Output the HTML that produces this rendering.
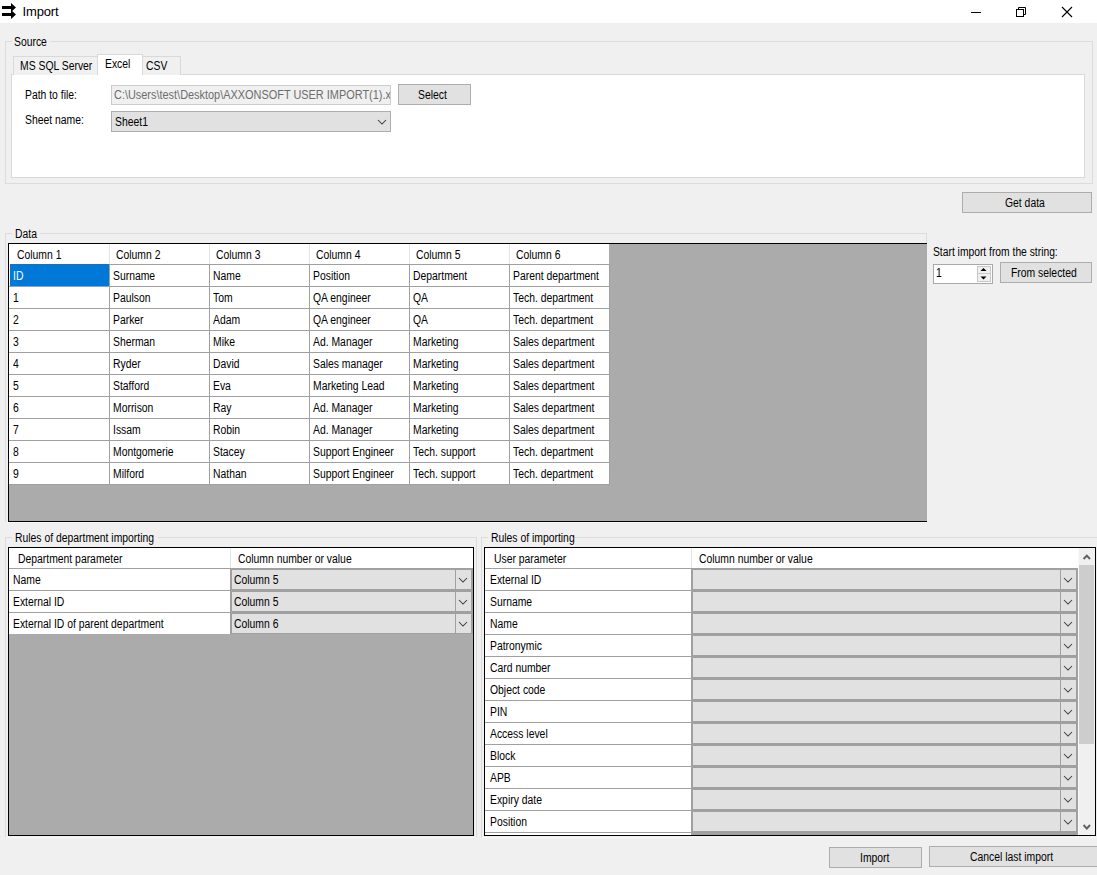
<!DOCTYPE html>
<html><head><meta charset="utf-8"><title>Import</title>
<style>
html,body{margin:0;padding:0}
body{width:1097px;height:875px;position:relative;overflow:hidden;background:#f0f0f0;font-family:"Liberation Sans",sans-serif;font-size:12px;line-height:13px;color:#000;letter-spacing:0px}
.a{position:absolute}
.t{position:absolute;white-space:nowrap;transform-origin:0 0;transform:scaleX(0.865)}
svg.a{display:block;overflow:visible}
</style></head><body>
<div class="a" style="left:0px;top:0px;width:1097px;height:23px;background:#fff;"></div>
<svg class="a" style="left:0;top:0" width="20" height="22"><rect x="2" y="6" width="10" height="3" fill="#000"/><rect x="2" y="13" width="10" height="3" fill="#000"/><polygon points="11,3 16,7.5 11,12" fill="#000"/><polygon points="11,10 16,14.5 11,19" fill="#000"/></svg>
<div class="t" style="left:22.5px;top:5px;font-size:13px;transform:scaleX(1);letter-spacing:-0.15px;">Import</div>
<div class="a" style="left:971px;top:12px;width:10px;height:1px;background:#000;"></div>
<svg class="a" style="left:1015px;top:6px" width="13" height="12"><rect x="1.5" y="3.5" width="7" height="7" fill="none" stroke="#000"/><path d="M3.5 3.5 V1.5 H10.5 V8.5 H8.5" fill="none" stroke="#000"/></svg>
<svg class="a" style="left:1061px;top:6px" width="12" height="12"><path d="M1 1 L11 11 M11 1 L1 11" stroke="#000" stroke-width="1.1"/></svg>
<div class="a" style="left:5px;top:41px;width:1088px;height:143px;border:1px solid #dcdcdc;box-sizing:border-box;"></div>
<div class="a" style="left:12px;top:36px;width:38px;height:12px;background:#f0f0f0;"></div>
<div class="t" style="left:14px;top:36px;">Source</div>
<div class="a" style="left:11px;top:74px;width:1074px;height:104px;background:#fff;border:1px solid #d9d9d9;box-sizing:border-box;"></div>
<div class="a" style="left:13px;top:56px;width:85px;height:19px;background:#f0f0f0;border:1px solid #d9d9d9;box-sizing:border-box;border-bottom:none;"></div>
<div class="a" style="left:142px;top:56px;width:39px;height:19px;background:#f0f0f0;border:1px solid #d9d9d9;box-sizing:border-box;border-bottom:none;"></div>
<div class="a" style="left:97px;top:54px;width:46px;height:21px;background:#fff;border:1px solid #d9d9d9;box-sizing:border-box;border-bottom:none;"></div>
<div class="t" style="left:19.5px;top:60px;">MS SQL Server</div>
<div class="t" style="left:105px;top:58px;">Excel</div>
<div class="t" style="left:146px;top:60px;">CSV</div>
<div class="t" style="left:24.5px;top:89px;">Path to file:</div>
<div class="a" style="left:111px;top:85px;width:280px;height:20px;background:#f0f0f0;border:1px solid #cccccc;box-sizing:border-box;"></div>
<div class="a" style="left:112px;top:86px;width:278px;height:18px;overflow:hidden">
<div class="t" style="left:1.9px;top:3px;transform:scaleX(0.91);color:#6d6d6d;">C:\Users\test\Desktop\AXXONSOFT USER IMPORT(1).xlsx</div>
</div>
<div class="a" style="left:398px;top:84px;width:73px;height:21px;background:#e1e1e1;border:1px solid #adadad;box-sizing:border-box;"></div>
<div class="t" style="left:418px;top:89px;">Select</div>
<div class="t" style="left:24.5px;top:114px;">Sheet name:</div>
<div class="a" style="left:111px;top:111px;width:280px;height:21px;background:#e1e1e1;border:1px solid #adadad;box-sizing:border-box;"></div>
<div class="t" style="left:115px;top:116px;">Sheet1</div>
<svg class="a" style="left:377.0px;top:119.0px" width="10" height="6"><polyline points="1,1 5.0,5 9,1" fill="none" stroke="#3a3a3a" stroke-width="1.05"/></svg>
<div class="a" style="left:962px;top:192px;width:130px;height:21px;background:#e1e1e1;border:1px solid #adadad;box-sizing:border-box;"></div>
<div class="t" style="left:1004.8px;top:197px;">Get data</div>
<div class="a" style="left:5px;top:233px;width:922px;height:290px;border:1px solid #dcdcdc;box-sizing:border-box;border-bottom-color:#f7f7f7;"></div>
<div class="a" style="left:12px;top:228px;width:28px;height:12px;background:#f0f0f0;"></div>
<div class="t" style="left:14.5px;top:228px;">Data</div>
<div class="a" style="left:8px;top:243px;width:919px;height:279px;background:#ababab;border-top:1px solid #000;border-left:1px solid #000;border-bottom:1px solid #000;box-sizing:border-box;"></div>
<div class="a" style="left:9px;top:244px;width:600px;height:20px;background:#fff;"></div>
<div class="t" style="left:17px;top:249px;">Column 1</div>
<div class="a" style="left:109px;top:244px;width:1px;height:20px;background:#e5e5e5;"></div>
<div class="t" style="left:116.2px;top:249px;">Column 2</div>
<div class="a" style="left:209px;top:244px;width:1px;height:20px;background:#e5e5e5;"></div>
<div class="t" style="left:216.2px;top:249px;">Column 3</div>
<div class="a" style="left:309px;top:244px;width:1px;height:20px;background:#e5e5e5;"></div>
<div class="t" style="left:316.2px;top:249px;">Column 4</div>
<div class="a" style="left:409px;top:244px;width:1px;height:20px;background:#e5e5e5;"></div>
<div class="t" style="left:416.2px;top:249px;">Column 5</div>
<div class="a" style="left:509px;top:244px;width:1px;height:20px;background:#e5e5e5;"></div>
<div class="t" style="left:516.2px;top:249px;">Column 6</div>
<div class="a" style="left:9px;top:264px;width:601px;height:221px;background:#a0a0a0;"></div>
<div class="a" style="left:9px;top:264px;width:1px;height:22px;background:#fff;"></div>
<div class="a" style="left:10px;top:264px;width:99px;height:22px;background:#0078d7;"></div>
<div class="t" style="left:13.2px;top:270px;color:#fff;">ID</div>
<div class="a" style="left:110px;top:265px;width:99px;height:21px;background:#fff;"></div>
<div class="t" style="left:113.2px;top:270px;">Surname</div>
<div class="a" style="left:210px;top:265px;width:99px;height:21px;background:#fff;"></div>
<div class="t" style="left:213.2px;top:270px;">Name</div>
<div class="a" style="left:310px;top:265px;width:99px;height:21px;background:#fff;"></div>
<div class="t" style="left:313.2px;top:270px;">Position</div>
<div class="a" style="left:410px;top:265px;width:99px;height:21px;background:#fff;"></div>
<div class="t" style="left:413.2px;top:270px;">Department</div>
<div class="a" style="left:510px;top:265px;width:99px;height:21px;background:#fff;"></div>
<div class="t" style="left:513.2px;top:270px;">Parent department</div>
<div class="a" style="left:9px;top:287px;width:100px;height:21px;background:#fff;"></div>
<div class="t" style="left:13.2px;top:292px;">1</div>
<div class="a" style="left:110px;top:287px;width:99px;height:21px;background:#fff;"></div>
<div class="t" style="left:113.2px;top:292px;">Paulson</div>
<div class="a" style="left:210px;top:287px;width:99px;height:21px;background:#fff;"></div>
<div class="t" style="left:213.2px;top:292px;">Tom</div>
<div class="a" style="left:310px;top:287px;width:99px;height:21px;background:#fff;"></div>
<div class="t" style="left:313.2px;top:292px;">QA engineer</div>
<div class="a" style="left:410px;top:287px;width:99px;height:21px;background:#fff;"></div>
<div class="t" style="left:413.2px;top:292px;">QA</div>
<div class="a" style="left:510px;top:287px;width:99px;height:21px;background:#fff;"></div>
<div class="t" style="left:513.2px;top:292px;">Tech. department</div>
<div class="a" style="left:9px;top:309px;width:100px;height:21px;background:#fff;"></div>
<div class="t" style="left:13.2px;top:314px;">2</div>
<div class="a" style="left:110px;top:309px;width:99px;height:21px;background:#fff;"></div>
<div class="t" style="left:113.2px;top:314px;">Parker</div>
<div class="a" style="left:210px;top:309px;width:99px;height:21px;background:#fff;"></div>
<div class="t" style="left:213.2px;top:314px;">Adam</div>
<div class="a" style="left:310px;top:309px;width:99px;height:21px;background:#fff;"></div>
<div class="t" style="left:313.2px;top:314px;">QA engineer</div>
<div class="a" style="left:410px;top:309px;width:99px;height:21px;background:#fff;"></div>
<div class="t" style="left:413.2px;top:314px;">QA</div>
<div class="a" style="left:510px;top:309px;width:99px;height:21px;background:#fff;"></div>
<div class="t" style="left:513.2px;top:314px;">Tech. department</div>
<div class="a" style="left:9px;top:331px;width:100px;height:21px;background:#fff;"></div>
<div class="t" style="left:13.2px;top:336px;">3</div>
<div class="a" style="left:110px;top:331px;width:99px;height:21px;background:#fff;"></div>
<div class="t" style="left:113.2px;top:336px;">Sherman</div>
<div class="a" style="left:210px;top:331px;width:99px;height:21px;background:#fff;"></div>
<div class="t" style="left:213.2px;top:336px;">Mike</div>
<div class="a" style="left:310px;top:331px;width:99px;height:21px;background:#fff;"></div>
<div class="t" style="left:313.2px;top:336px;">Ad. Manager</div>
<div class="a" style="left:410px;top:331px;width:99px;height:21px;background:#fff;"></div>
<div class="t" style="left:413.2px;top:336px;">Marketing</div>
<div class="a" style="left:510px;top:331px;width:99px;height:21px;background:#fff;"></div>
<div class="t" style="left:513.2px;top:336px;">Sales department</div>
<div class="a" style="left:9px;top:353px;width:100px;height:21px;background:#fff;"></div>
<div class="t" style="left:13.2px;top:358px;">4</div>
<div class="a" style="left:110px;top:353px;width:99px;height:21px;background:#fff;"></div>
<div class="t" style="left:113.2px;top:358px;">Ryder</div>
<div class="a" style="left:210px;top:353px;width:99px;height:21px;background:#fff;"></div>
<div class="t" style="left:213.2px;top:358px;">David</div>
<div class="a" style="left:310px;top:353px;width:99px;height:21px;background:#fff;"></div>
<div class="t" style="left:313.2px;top:358px;">Sales manager</div>
<div class="a" style="left:410px;top:353px;width:99px;height:21px;background:#fff;"></div>
<div class="t" style="left:413.2px;top:358px;">Marketing</div>
<div class="a" style="left:510px;top:353px;width:99px;height:21px;background:#fff;"></div>
<div class="t" style="left:513.2px;top:358px;">Sales department</div>
<div class="a" style="left:9px;top:375px;width:100px;height:21px;background:#fff;"></div>
<div class="t" style="left:13.2px;top:380px;">5</div>
<div class="a" style="left:110px;top:375px;width:99px;height:21px;background:#fff;"></div>
<div class="t" style="left:113.2px;top:380px;">Stafford</div>
<div class="a" style="left:210px;top:375px;width:99px;height:21px;background:#fff;"></div>
<div class="t" style="left:213.2px;top:380px;">Eva</div>
<div class="a" style="left:310px;top:375px;width:99px;height:21px;background:#fff;"></div>
<div class="t" style="left:313.2px;top:380px;">Marketing Lead</div>
<div class="a" style="left:410px;top:375px;width:99px;height:21px;background:#fff;"></div>
<div class="t" style="left:413.2px;top:380px;">Marketing</div>
<div class="a" style="left:510px;top:375px;width:99px;height:21px;background:#fff;"></div>
<div class="t" style="left:513.2px;top:380px;">Sales department</div>
<div class="a" style="left:9px;top:397px;width:100px;height:21px;background:#fff;"></div>
<div class="t" style="left:13.2px;top:402px;">6</div>
<div class="a" style="left:110px;top:397px;width:99px;height:21px;background:#fff;"></div>
<div class="t" style="left:113.2px;top:402px;">Morrison</div>
<div class="a" style="left:210px;top:397px;width:99px;height:21px;background:#fff;"></div>
<div class="t" style="left:213.2px;top:402px;">Ray</div>
<div class="a" style="left:310px;top:397px;width:99px;height:21px;background:#fff;"></div>
<div class="t" style="left:313.2px;top:402px;">Ad. Manager</div>
<div class="a" style="left:410px;top:397px;width:99px;height:21px;background:#fff;"></div>
<div class="t" style="left:413.2px;top:402px;">Marketing</div>
<div class="a" style="left:510px;top:397px;width:99px;height:21px;background:#fff;"></div>
<div class="t" style="left:513.2px;top:402px;">Sales department</div>
<div class="a" style="left:9px;top:419px;width:100px;height:21px;background:#fff;"></div>
<div class="t" style="left:13.2px;top:424px;">7</div>
<div class="a" style="left:110px;top:419px;width:99px;height:21px;background:#fff;"></div>
<div class="t" style="left:113.2px;top:424px;">Issam</div>
<div class="a" style="left:210px;top:419px;width:99px;height:21px;background:#fff;"></div>
<div class="t" style="left:213.2px;top:424px;">Robin</div>
<div class="a" style="left:310px;top:419px;width:99px;height:21px;background:#fff;"></div>
<div class="t" style="left:313.2px;top:424px;">Ad. Manager</div>
<div class="a" style="left:410px;top:419px;width:99px;height:21px;background:#fff;"></div>
<div class="t" style="left:413.2px;top:424px;">Marketing</div>
<div class="a" style="left:510px;top:419px;width:99px;height:21px;background:#fff;"></div>
<div class="t" style="left:513.2px;top:424px;">Sales department</div>
<div class="a" style="left:9px;top:441px;width:100px;height:21px;background:#fff;"></div>
<div class="t" style="left:13.2px;top:446px;">8</div>
<div class="a" style="left:110px;top:441px;width:99px;height:21px;background:#fff;"></div>
<div class="t" style="left:113.2px;top:446px;">Montgomerie</div>
<div class="a" style="left:210px;top:441px;width:99px;height:21px;background:#fff;"></div>
<div class="t" style="left:213.2px;top:446px;">Stacey</div>
<div class="a" style="left:310px;top:441px;width:99px;height:21px;background:#fff;"></div>
<div class="t" style="left:313.2px;top:446px;">Support Engineer</div>
<div class="a" style="left:410px;top:441px;width:99px;height:21px;background:#fff;"></div>
<div class="t" style="left:413.2px;top:446px;">Tech. support</div>
<div class="a" style="left:510px;top:441px;width:99px;height:21px;background:#fff;"></div>
<div class="t" style="left:513.2px;top:446px;">Tech. department</div>
<div class="a" style="left:9px;top:463px;width:100px;height:21px;background:#fff;"></div>
<div class="t" style="left:13.2px;top:468px;">9</div>
<div class="a" style="left:110px;top:463px;width:99px;height:21px;background:#fff;"></div>
<div class="t" style="left:113.2px;top:468px;">Milford</div>
<div class="a" style="left:210px;top:463px;width:99px;height:21px;background:#fff;"></div>
<div class="t" style="left:213.2px;top:468px;">Nathan</div>
<div class="a" style="left:310px;top:463px;width:99px;height:21px;background:#fff;"></div>
<div class="t" style="left:313.2px;top:468px;">Support Engineer</div>
<div class="a" style="left:410px;top:463px;width:99px;height:21px;background:#fff;"></div>
<div class="t" style="left:413.2px;top:468px;">Tech. support</div>
<div class="a" style="left:510px;top:463px;width:99px;height:21px;background:#fff;"></div>
<div class="t" style="left:513.2px;top:468px;">Tech. department</div>
<div class="t" style="left:932.8px;top:246px;transform:scaleX(0.858);">Start import from the string:</div>
<div class="a" style="left:933px;top:264px;width:60px;height:20px;background:#fff;border:1px solid #a9a9a9;box-sizing:border-box;"></div>
<div class="t" style="left:936px;top:267px;">1</div>
<div class="a" style="left:977px;top:266px;width:14px;height:16px;background:#f0f0f0;border:1px solid #c8c8c8;box-sizing:border-box;"></div>
<div class="a" style="left:978px;top:273px;width:12px;height:1px;background:#c8c8c8;"></div>
<svg class="a" style="left:980px;top:267px" width="8" height="14"><polygon points="0.5,4 3.5,1 6.5,4" fill="#000"/><polygon points="0.5,9.5 3.5,12.5 6.5,9.5" fill="#000"/></svg>
<div class="a" style="left:1000px;top:262px;width:92px;height:21px;background:#e1e1e1;border:1px solid #adadad;box-sizing:border-box;"></div>
<div class="t" style="left:1011.3px;top:267px;">From selected</div>
<div class="a" style="left:5px;top:537px;width:472px;height:301px;border:1px solid #dcdcdc;box-sizing:border-box;border-bottom-color:#f7f7f7;"></div>
<div class="a" style="left:12px;top:532px;width:146px;height:12px;background:#f0f0f0;"></div>
<div class="t" style="left:14.5px;top:532px;">Rules of department importing</div>
<div class="a" style="left:8px;top:547px;width:466px;height:289px;background:#ababab;border:1px solid #000;box-sizing:border-box;"></div>
<div class="a" style="left:9px;top:548px;width:464px;height:20px;background:#fff;"></div>
<div class="a" style="left:230px;top:548px;width:1px;height:20px;background:#e5e5e5;"></div>
<div class="t" style="left:18px;top:553px;">Department parameter</div>
<div class="t" style="left:237.5px;top:553px;">Column number or value</div>
<div class="a" style="left:9px;top:568px;width:464px;height:66px;background:#a0a0a0;"></div>
<div class="a" style="left:9px;top:569px;width:221px;height:21px;background:#fff;"></div>
<div class="t" style="left:13.4px;top:574px;">Name</div>
<div class="a" style="left:232px;top:570px;width:239px;height:19px;background:#e1e1e1;"></div>
<div class="a" style="left:455px;top:570px;width:1px;height:19px;background:#a0a0a0;"></div>
<div class="t" style="left:233.7px;top:574px;">Column 5</div>
<svg class="a" style="left:458.0px;top:577.0px" width="10" height="6"><polyline points="1,1 5.0,5 9,1" fill="none" stroke="#3a3a3a" stroke-width="1.05"/></svg>
<div class="a" style="left:9px;top:591px;width:221px;height:21px;background:#fff;"></div>
<div class="t" style="left:13.4px;top:596px;">External ID</div>
<div class="a" style="left:232px;top:592px;width:239px;height:19px;background:#e1e1e1;"></div>
<div class="a" style="left:455px;top:592px;width:1px;height:19px;background:#a0a0a0;"></div>
<div class="t" style="left:233.7px;top:596px;">Column 5</div>
<svg class="a" style="left:458.0px;top:599.0px" width="10" height="6"><polyline points="1,1 5.0,5 9,1" fill="none" stroke="#3a3a3a" stroke-width="1.05"/></svg>
<div class="a" style="left:9px;top:613px;width:221px;height:21px;background:#fff;"></div>
<div class="t" style="left:13.4px;top:618px;">External ID of parent department</div>
<div class="a" style="left:232px;top:614px;width:239px;height:19px;background:#e1e1e1;"></div>
<div class="a" style="left:455px;top:614px;width:1px;height:19px;background:#a0a0a0;"></div>
<div class="t" style="left:233.7px;top:618px;">Column 6</div>
<svg class="a" style="left:458.0px;top:621.0px" width="10" height="6"><polyline points="1,1 5.0,5 9,1" fill="none" stroke="#3a3a3a" stroke-width="1.05"/></svg>
<div class="a" style="left:481px;top:537px;width:620px;height:301px;border:1px solid #dcdcdc;box-sizing:border-box;border-bottom-color:#f7f7f7;"></div>
<div class="a" style="left:488px;top:532px;width:86px;height:12px;background:#f0f0f0;"></div>
<div class="t" style="left:490.5px;top:532px;">Rules of importing</div>
<div class="a" style="left:484px;top:547px;width:612px;height:289px;background:#fff;border:1px solid #000;box-sizing:border-box;"></div>
<div class="a" style="left:485px;top:548px;width:593px;height:20px;background:#fff;"></div>
<div class="a" style="left:691px;top:548px;width:1px;height:20px;background:#e5e5e5;"></div>
<div class="t" style="left:494.4px;top:553px;">User parameter</div>
<div class="t" style="left:698.5px;top:553px;">Column number or value</div>
<div class="a" style="left:0;top:0;width:1097px;height:835px;overflow:hidden">
<div class="a" style="left:485px;top:568px;width:593px;height:267px;background:#a0a0a0;"></div>
<div class="a" style="left:485px;top:569px;width:206px;height:21px;background:#fff;"></div>
<div class="t" style="left:489.5px;top:574px;">External ID</div>
<div class="a" style="left:693px;top:570px;width:383px;height:19px;background:#e1e1e1;"></div>
<div class="a" style="left:1060px;top:570px;width:1px;height:19px;background:#a0a0a0;"></div>
<svg class="a" style="left:1062.5px;top:577.0px" width="10" height="6"><polyline points="1,1 5.0,5 9,1" fill="none" stroke="#3a3a3a" stroke-width="1.05"/></svg>
<div class="a" style="left:485px;top:591px;width:206px;height:21px;background:#fff;"></div>
<div class="t" style="left:489.5px;top:596px;">Surname</div>
<div class="a" style="left:693px;top:592px;width:383px;height:19px;background:#e1e1e1;"></div>
<div class="a" style="left:1060px;top:592px;width:1px;height:19px;background:#a0a0a0;"></div>
<svg class="a" style="left:1062.5px;top:599.0px" width="10" height="6"><polyline points="1,1 5.0,5 9,1" fill="none" stroke="#3a3a3a" stroke-width="1.05"/></svg>
<div class="a" style="left:485px;top:613px;width:206px;height:21px;background:#fff;"></div>
<div class="t" style="left:489.5px;top:618px;">Name</div>
<div class="a" style="left:693px;top:614px;width:383px;height:19px;background:#e1e1e1;"></div>
<div class="a" style="left:1060px;top:614px;width:1px;height:19px;background:#a0a0a0;"></div>
<svg class="a" style="left:1062.5px;top:621.0px" width="10" height="6"><polyline points="1,1 5.0,5 9,1" fill="none" stroke="#3a3a3a" stroke-width="1.05"/></svg>
<div class="a" style="left:485px;top:635px;width:206px;height:21px;background:#fff;"></div>
<div class="t" style="left:489.5px;top:640px;">Patronymic</div>
<div class="a" style="left:693px;top:636px;width:383px;height:19px;background:#e1e1e1;"></div>
<div class="a" style="left:1060px;top:636px;width:1px;height:19px;background:#a0a0a0;"></div>
<svg class="a" style="left:1062.5px;top:643.0px" width="10" height="6"><polyline points="1,1 5.0,5 9,1" fill="none" stroke="#3a3a3a" stroke-width="1.05"/></svg>
<div class="a" style="left:485px;top:657px;width:206px;height:21px;background:#fff;"></div>
<div class="t" style="left:489.5px;top:662px;">Card number</div>
<div class="a" style="left:693px;top:658px;width:383px;height:19px;background:#e1e1e1;"></div>
<div class="a" style="left:1060px;top:658px;width:1px;height:19px;background:#a0a0a0;"></div>
<svg class="a" style="left:1062.5px;top:665.0px" width="10" height="6"><polyline points="1,1 5.0,5 9,1" fill="none" stroke="#3a3a3a" stroke-width="1.05"/></svg>
<div class="a" style="left:485px;top:679px;width:206px;height:21px;background:#fff;"></div>
<div class="t" style="left:489.5px;top:684px;">Object code</div>
<div class="a" style="left:693px;top:680px;width:383px;height:19px;background:#e1e1e1;"></div>
<div class="a" style="left:1060px;top:680px;width:1px;height:19px;background:#a0a0a0;"></div>
<svg class="a" style="left:1062.5px;top:687.0px" width="10" height="6"><polyline points="1,1 5.0,5 9,1" fill="none" stroke="#3a3a3a" stroke-width="1.05"/></svg>
<div class="a" style="left:485px;top:701px;width:206px;height:21px;background:#fff;"></div>
<div class="t" style="left:489.5px;top:706px;">PIN</div>
<div class="a" style="left:693px;top:702px;width:383px;height:19px;background:#e1e1e1;"></div>
<div class="a" style="left:1060px;top:702px;width:1px;height:19px;background:#a0a0a0;"></div>
<svg class="a" style="left:1062.5px;top:709.0px" width="10" height="6"><polyline points="1,1 5.0,5 9,1" fill="none" stroke="#3a3a3a" stroke-width="1.05"/></svg>
<div class="a" style="left:485px;top:723px;width:206px;height:21px;background:#fff;"></div>
<div class="t" style="left:489.5px;top:728px;">Access level</div>
<div class="a" style="left:693px;top:724px;width:383px;height:19px;background:#e1e1e1;"></div>
<div class="a" style="left:1060px;top:724px;width:1px;height:19px;background:#a0a0a0;"></div>
<svg class="a" style="left:1062.5px;top:731.0px" width="10" height="6"><polyline points="1,1 5.0,5 9,1" fill="none" stroke="#3a3a3a" stroke-width="1.05"/></svg>
<div class="a" style="left:485px;top:745px;width:206px;height:21px;background:#fff;"></div>
<div class="t" style="left:489.5px;top:750px;">Block</div>
<div class="a" style="left:693px;top:746px;width:383px;height:19px;background:#e1e1e1;"></div>
<div class="a" style="left:1060px;top:746px;width:1px;height:19px;background:#a0a0a0;"></div>
<svg class="a" style="left:1062.5px;top:753.0px" width="10" height="6"><polyline points="1,1 5.0,5 9,1" fill="none" stroke="#3a3a3a" stroke-width="1.05"/></svg>
<div class="a" style="left:485px;top:767px;width:206px;height:21px;background:#fff;"></div>
<div class="t" style="left:489.5px;top:772px;">APB</div>
<div class="a" style="left:693px;top:768px;width:383px;height:19px;background:#e1e1e1;"></div>
<div class="a" style="left:1060px;top:768px;width:1px;height:19px;background:#a0a0a0;"></div>
<svg class="a" style="left:1062.5px;top:775.0px" width="10" height="6"><polyline points="1,1 5.0,5 9,1" fill="none" stroke="#3a3a3a" stroke-width="1.05"/></svg>
<div class="a" style="left:485px;top:789px;width:206px;height:21px;background:#fff;"></div>
<div class="t" style="left:489.5px;top:794px;">Expiry date</div>
<div class="a" style="left:693px;top:790px;width:383px;height:19px;background:#e1e1e1;"></div>
<div class="a" style="left:1060px;top:790px;width:1px;height:19px;background:#a0a0a0;"></div>
<svg class="a" style="left:1062.5px;top:797.0px" width="10" height="6"><polyline points="1,1 5.0,5 9,1" fill="none" stroke="#3a3a3a" stroke-width="1.05"/></svg>
<div class="a" style="left:485px;top:811px;width:206px;height:21px;background:#fff;"></div>
<div class="t" style="left:489.5px;top:816px;">Position</div>
<div class="a" style="left:693px;top:812px;width:383px;height:19px;background:#e1e1e1;"></div>
<div class="a" style="left:1060px;top:812px;width:1px;height:19px;background:#a0a0a0;"></div>
<svg class="a" style="left:1062.5px;top:819.0px" width="10" height="6"><polyline points="1,1 5.0,5 9,1" fill="none" stroke="#3a3a3a" stroke-width="1.05"/></svg>
<div class="a" style="left:485px;top:833px;width:206px;height:21px;background:#fff;"></div>
<div class="a" style="left:693px;top:834px;width:383px;height:19px;background:#e1e1e1;"></div>
<div class="a" style="left:1060px;top:834px;width:1px;height:19px;background:#a0a0a0;"></div>
<div class="a" style="left:485px;top:833px;width:206px;height:2px;background:#fff;"></div>
<div class="a" style="left:692px;top:831px;width:386px;height:4px;background:#a0a0a0;"></div>
</div>
<div class="a" style="left:1078px;top:548px;width:17px;height:287px;background:#f0f0f0;"></div>
<div class="a" style="left:1078px;top:548px;width:1px;height:287px;background:#fafafa;"></div>
<div class="a" style="left:1079px;top:565px;width:15px;height:179px;background:#cdcdcd;"></div>
<svg class="a" style="left:1082px;top:552px" width="10" height="10"><polyline points="1.6,7 4.8,3.6 8,7" fill="none" stroke="#606060" stroke-width="2"/></svg>
<svg class="a" style="left:1082px;top:822px" width="10" height="10"><polyline points="1.6,3 4.8,6.6 8,3" fill="none" stroke="#606060" stroke-width="2"/></svg>
<div class="a" style="left:829px;top:847px;width:93px;height:21px;background:#e1e1e1;border:1px solid #adadad;box-sizing:border-box;"></div>
<div class="t" style="left:859.5px;top:852px;">Import</div>
<div class="a" style="left:929px;top:846px;width:175px;height:21px;background:#e1e1e1;border:1px solid #adadad;box-sizing:border-box;"></div>
<div class="t" style="left:970px;top:851px;">Cancel last import</div>
</body></html>
